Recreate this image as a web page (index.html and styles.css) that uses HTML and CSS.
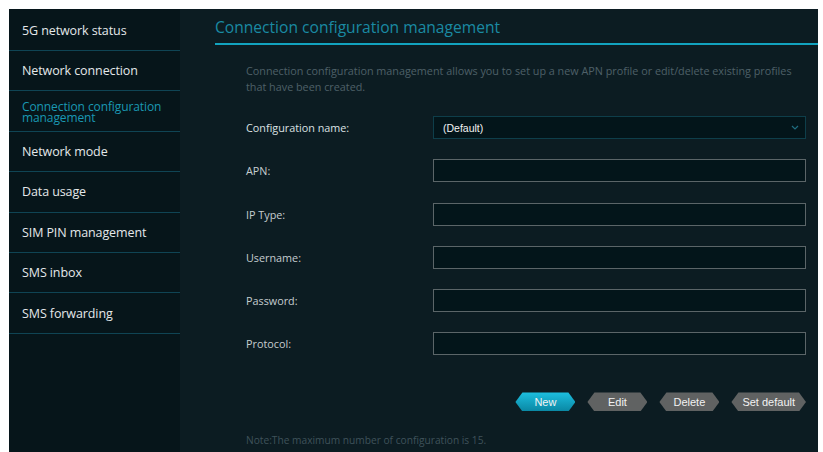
FILE: index.html
```html
<!DOCTYPE html>
<html lang="en">
<head>
<meta charset="utf-8">
<title>Connection configuration management</title>
<link rel="stylesheet" href="styles.css">
</head>
<body>
<div class="app">
  <nav class="sidebar">
    <a class="nav-item">5G network status</a>
    <a class="nav-item">Network connection</a>
    <a class="nav-item active">Connection configuration management</a>
    <a class="nav-item">Network mode</a>
    <a class="nav-item">Data usage</a>
    <a class="nav-item">SIM PIN management</a>
    <a class="nav-item">SMS inbox</a>
    <a class="nav-item">SMS forwarding</a>
  </nav>
  <main class="content">
    <h1 class="page-title">Connection configuration management</h1>
    <div class="body">
      <p class="intro">Connection configuration management allows you to set up a new APN profile or edit/delete existing profiles that have been created.</p>
      <div class="form">
        <label class="label label-strong">Configuration name:</label>
        <div class="select">
          <span>(Default)</span>
          <svg class="chevron" width="8" height="5" viewBox="0 0 8 5"><path d="M1 1l3 3 3-3" fill="none" stroke="#1f6d80" stroke-width="1.2"/></svg>
        </div>
        <label class="label">APN:</label>
        <div class="input"></div>
        <label class="label">IP Type:</label>
        <div class="input"></div>
        <label class="label">Username:</label>
        <div class="input"></div>
        <label class="label">Password:</label>
        <div class="input"></div>
        <label class="label">Protocol:</label>
        <div class="input"></div>
      </div>
      <div class="actions">
        <button class="hex-btn primary">New</button>
        <button class="hex-btn">Edit</button>
        <button class="hex-btn">Delete</button>
        <button class="hex-btn">Set default</button>
      </div>
      <p class="note">Note:The maximum number of configuration is 15.</p>
    </div>
  </main>
</div>
</body>
</html>
```
FILE: styles.css
```css
html, body {
  margin: 0;
  padding: 0;
  background: #ffffff;
}

body {
  font-family: "Open Sans", "Liberation Sans", sans-serif;
}

.app {
  display: flex;
  margin: 9px 5px 0 9px;
  height: 443px;
  background: #0c1c22;
}

/* left navigation */
.sidebar {
  width: 171px;
  flex: none;
  background: #06151a;
  display: flex;
  flex-direction: column;
}

.nav-item {
  display: flex;
  align-items: center;
  box-sizing: border-box;
  height: 40.4px;
  padding: 0 12px 0 13px;
  border-bottom: 1px solid #0f4454;
  color: #e4e8ea;
  font-size: 12.5px;
  letter-spacing: -0.1px;
  cursor: pointer;
}

.nav-item:first-child {
  height: 42px;
  padding-top: 1px;
}

.nav-item.active {
  color: #1a98b3;
  font-size: 12px;
  line-height: 11px;
  padding-top: 1px;
}

/* main panel */
.content {
  flex: 1;
  padding-left: 35px;
  display: flex;
  flex-direction: column;
}

.page-title {
  margin: 0;
  height: 34px;
  line-height: 36px;
  font-size: 15.6px;
  font-weight: 400;
  color: #1a8aa3;
  border-bottom: 2px solid #12a3bf;
}

.body {
  padding-left: 31px;
  padding-right: 12px;
}

.intro {
  margin: 18px 0 0;
  font-size: 10.8px;
  line-height: 16px;
  color: #4e6068;
}

.form {
  margin-top: 21px;
  display: grid;
  grid-template-columns: 187px 1fr;
  row-gap: 20.3px;
  align-items: center;
}

.label {
  font-size: 10.8px;
  color: #c6cdd0;
}

.label-strong {
  color: #dce2e4;
}

.input,
.select {
  box-sizing: border-box;
  height: 23px;
  background: #03151a;
  border: 1px solid #5b6568;
}

.select {
  border-color: #0e3e4a;
  display: flex;
  align-items: center;
  justify-content: space-between;
  padding: 0 6px 0 9px;
  font-family: "Liberation Sans", Arial, sans-serif;
  font-size: 10.5px;
  color: #f0f2f3;
}

.chevron {
  display: block;
}

.actions {
  margin-top: 37px;
  display: flex;
  justify-content: flex-end;
  gap: 12px;
}

.hex-btn {
  height: 19px;
  min-width: 60px;
  padding: 0 11px;
  border: 0;
  background: #606262;
  color: #f2f2f2;
  font-family: "Liberation Sans", Arial, sans-serif;
  font-size: 11px;
  clip-path: polygon(7px 0, calc(100% - 7px) 0, 100% 50%, calc(100% - 7px) 100%, 7px 100%, 0 50%);
  cursor: pointer;
}

.hex-btn.primary {
  background: linear-gradient(#1dbfe0, #0a88a4);
}

.note {
  margin: 22px 0 0;
  font-size: 10.2px;
  color: #3f525a;
}
```
